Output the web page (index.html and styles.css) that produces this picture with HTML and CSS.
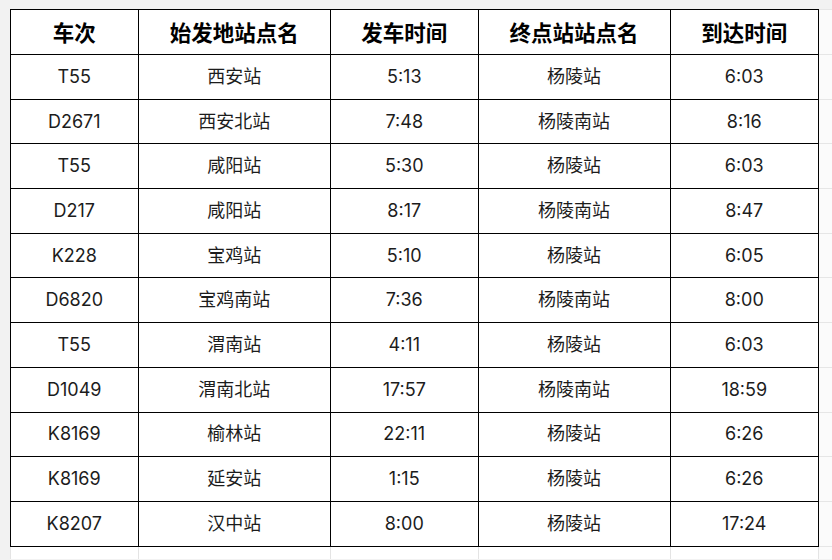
FILE: index.html
```html
<!DOCTYPE html>
<html lang="zh-CN">
<head>
<meta charset="utf-8">
<title>车次时刻表</title>
<link rel="stylesheet" href="styles.css">
</head>
<body>
<div class="sheet">
<table class="timetable">
  <colgroup>
    <col class="c1"><col class="c2"><col class="c3"><col class="c4"><col class="c5"><col class="cx">
  </colgroup>
  <thead>
    <tr><th>车次</th><th>始发地站点名</th><th>发车时间</th><th>终点站站点名</th><th>到达时间</th><td class="fill"></td></tr>
  </thead>
  <tbody>
    <tr><td>T55</td><td>西安站</td><td>5:13</td><td>杨陵站</td><td>6:03</td><td class="fill"></td></tr>
    <tr><td>D2671</td><td>西安北站</td><td>7:48</td><td>杨陵南站</td><td>8:16</td><td class="fill"></td></tr>
    <tr><td>T55</td><td>咸阳站</td><td>5:30</td><td>杨陵站</td><td>6:03</td><td class="fill"></td></tr>
    <tr><td>D217</td><td>咸阳站</td><td>8:17</td><td>杨陵南站</td><td>8:47</td><td class="fill"></td></tr>
    <tr><td>K228</td><td>宝鸡站</td><td>5:10</td><td>杨陵站</td><td>6:05</td><td class="fill"></td></tr>
    <tr><td>D6820</td><td>宝鸡南站</td><td>7:36</td><td>杨陵南站</td><td>8:00</td><td class="fill"></td></tr>
    <tr><td>T55</td><td>渭南站</td><td>4:11</td><td>杨陵站</td><td>6:03</td><td class="fill"></td></tr>
    <tr><td>D1049</td><td>渭南北站</td><td>17:57</td><td>杨陵南站</td><td>18:59</td><td class="fill"></td></tr>
    <tr><td>K8169</td><td>榆林站</td><td>22:11</td><td>杨陵站</td><td>6:26</td><td class="fill"></td></tr>
    <tr><td>K8169</td><td>延安站</td><td>1:15</td><td>杨陵站</td><td>6:26</td><td class="fill"></td></tr>
    <tr><td>K8207</td><td>汉中站</td><td>8:00</td><td>杨陵站</td><td>17:24</td><td class="fill"></td></tr>
    <tr class="blank"><td></td><td></td><td></td><td></td><td></td><td class="fill"></td></tr>
  </tbody>
</table>
</div>
</body>
</html>
```

FILE: styles.css
```css
html, body {
  margin: 0;
  padding: 0;
  background: #f2f2f2;
  overflow: hidden;
}

.sheet {
  padding: 9px 0 0 10px;
}

.timetable {
  border-collapse: collapse;
  table-layout: fixed;
  width: 824px;
  font-family: Inter, "Noto Sans CJK SC", sans-serif;
  background: #fff;
}

.c1 { width: 127.5px; }
.c2 { width: 192.5px; }
.c3 { width: 147.5px; }
.c4 { width: 192px; }
.c5 { width: 148.5px; }
.cx { width: 16px; }

.timetable th,
.timetable td {
  border: 1.5px solid #000;
  text-align: center;
  vertical-align: middle;
  padding: 0;
  height: 43.7px;
  line-height: 24px;
}

.timetable th {
  font-family: "Noto Sans CJK SC", sans-serif;
  font-weight: 700;
  font-size: 21.5px;
  color: #000;
  height: 44px;
}

.timetable td {
  font-size: 18px;
  color: #1c1c1c;
}

.timetable td.fill {
  border-top: 1px solid #e6e6e6;
  border-bottom: 1px solid #e6e6e6;
  border-right: none;
  background: #fbfbfb;
}

.timetable tr.blank td {
  height: 12px;
  line-height: 12px;
  border-bottom: none;
  border-left-color: #e4e4e4;
  border-right-color: #e4e4e4;
  border-left-width: 1px;
  border-right-width: 1px;
}

.timetable tr.blank td.fill {
  border-right: none;
}
```
